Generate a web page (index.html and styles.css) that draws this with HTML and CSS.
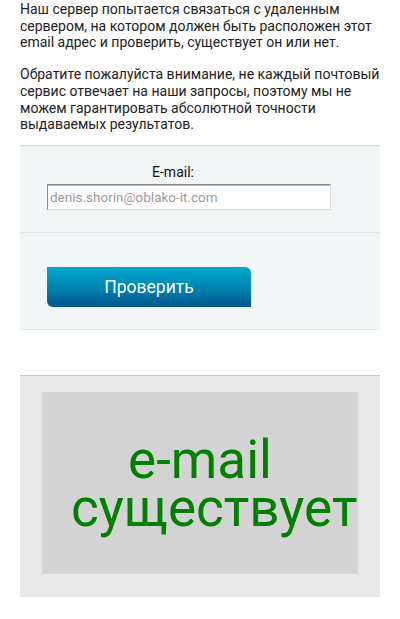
FILE: index.html
```html
<!DOCTYPE html>
<html>
<head>
  <title>Проверка email</title>
  <link rel="stylesheet" href="styles.css">
</head>
<body>
  <div id="content">
    <div class="notes">
      <p>Наш сервер попытается связаться с удаленным сервером, на котором должен быть расположен этот email адрес и проверить, существует он или нет.</p>
      <p>Обратите пожалуйста внимание, не каждый почтовый сервис отвечает на наши запросы, поэтому мы не можем гарантировать абсолютной точности выдаваемых результатов.</p>
    </div>

    <div id="checkForm">
      <div class="form-row">
        <label for="emailInput" class="field-label">E-mail:</label>
        <input type="text" id="emailInput" class="field-input" placeholder="denis.shorin@oblako-it.com" />
      </div>
      <div class="form-row buttons">
        <button class="check-button">Проверить</button>
      </div>
    </div>

    <div id="result">
      <div class="result-box">e-mail существует</div>
    </div>
  </div>
</body>
</html>
```

FILE: styles.css
```css
body {
  font-family: Roboto, "Liberation Sans", sans-serif;
  margin: 0;
  color: #222;
  background-color: #fff;
}

#content {
  padding: 1px 20px 20px;
}

.notes {
  margin-bottom: 12px;
}

.notes p {
  font-size: 14px;
  line-height: 16.7px;
  margin: 0 0 15px;
}

.notes p:last-child {
  margin-bottom: 0;
}

/* Form panel */
#checkForm {
  background-color: #f2f5f6;
  border-top: 1px solid #cfdce3;
  border-bottom: 1px solid #e3e8ea;
}

.form-row {
  padding: 18px 0 22px 27px;
}

.form-row + .form-row {
  border-top: 1px solid #e2e8ea;
}

.form-row.buttons {
  padding: 34px 0 22px 27px;
}

.field-label {
  display: block;
  width: 252px;
  text-align: center;
  font-size: 14px;
  line-height: 16px;
  color: #111;
  margin-bottom: 4px;
}

.field-input {
  display: block;
  box-sizing: border-box;
  width: 284px;
  height: 26px;
  margin: 0;
  padding: 0 2px;
  font-family: Roboto, "Liberation Sans", sans-serif;
  font-size: 13.5px;
  background-color: #fff;
  border: 1px solid;
  border-color: #8a8a8a #dcdcdc #dcdcdc #8a8a8a;
  box-shadow: inset 0 1px 0 #b8b8b8;
}

.field-input::placeholder {
  color: #9a9a9a;
}

.check-button {
  display: block;
  width: 204px;
  height: 40px;
  padding: 0;
  border: none;
  border-radius: 0 6px 0 6px;
  background: linear-gradient(to bottom, #00a9cd, #0086b2 50%, #00578a);
  color: #fff;
  font-family: Roboto, "Liberation Sans", sans-serif;
  font-size: 17.5px;
  cursor: pointer;
}

/* Result */
#result {
  margin-top: 45px;
  background-color: #e8e8e8;
  border-top: 1px solid #c9c9c9;
  padding: 16px 22px 23px;
}

.result-box {
  box-sizing: border-box;
  height: 182px;
  padding: 44px 29px 0;
  background-color: #d3d3d3;
  color: #008000;
  font-size: 53px;
  line-height: 48px;
  text-align: center;
}
```
